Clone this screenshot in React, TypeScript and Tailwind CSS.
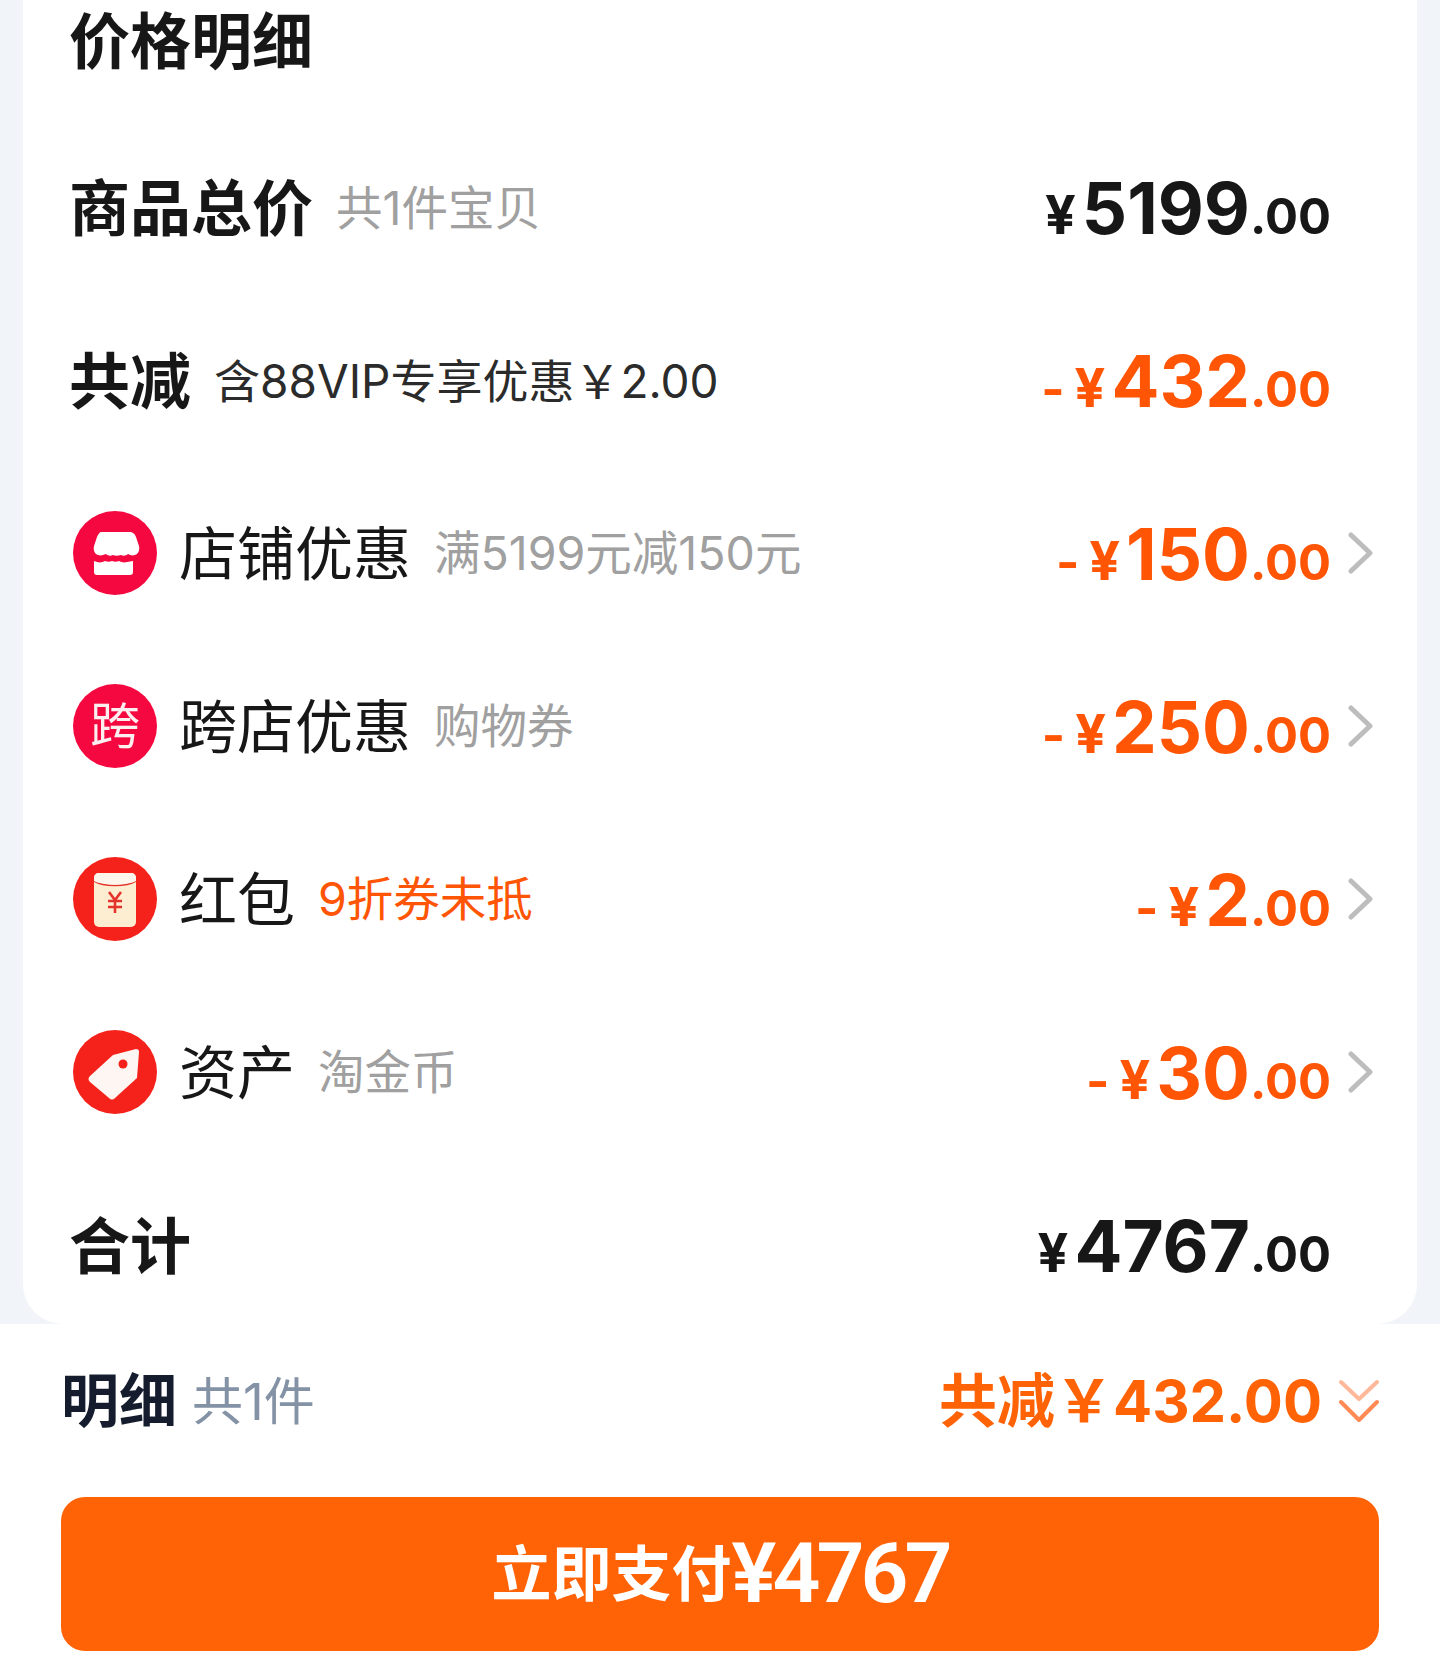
import type { ReactNode } from 'react';

const cjk = "font-['Inter','Noto_Sans_CJK_SC',sans-serif]";

function StoreIcon() {
  return (
    <svg viewBox="0 0 84 84" className="w-[84px] h-[84px] shrink-0">
      <circle cx="42" cy="42" r="42" fill="#f5073f" />
      <path d="M28 21h28c4 0 6 2 7 5l3 9c1 5-1 8-4 9-3 1-5 0-7-1-2 2-5 2-7 1-3 1-6 1-8 0-2 1-5 1-7-1-3 1-5 2-8 1-3-1-5-4-4-9l3-9c1-3 3-5 4-5z" fill="#fff" />
      <path d="M24 51c3 1 6 0 8-1 2 1 5 1 7 0 2 1 5 1 7 0 2 1 5 2 8 1l6-1v11c0 2-1 3-3 3H24c-2 0-3-1-3-3V50z" fill="#fff" />
    </svg>
  );
}

function KuaIcon() {
  return (
    <div className={`w-[84px] h-[84px] shrink-0 rounded-full bg-[#f5073f] flex items-center justify-center text-[50px] leading-none text-[#fdeef0] ${cjk}`}>跨</div>
  );
}

function EnvelopeIcon() {
  return (
    <svg viewBox="0 0 84 84" className="w-[84px] h-[84px] shrink-0">
      <circle cx="42" cy="42" r="42" fill="#f5221b" />
      <rect x="21" y="16" width="42" height="54" rx="5" fill="#fdeed2" />
      <path d="M21 24c10 6 32 6 42 0" fill="none" stroke="#e4332a" strokeWidth="1.6" />
      <path d="M21 21c0-3 2-5 5-5h32c3 0 5 2 5 5v3c-10 5-32 5-42 0z" fill="#fdf6ec" />
      <path d="M36 35l6 8 6-8M35 44h14M35 50h14M42 43v13" fill="none" stroke="#e4332a" strokeWidth="2.6" />
    </svg>
  );
}

function TagIcon() {
  return (
    <svg viewBox="0 0 84 84" className="w-[84px] h-[84px] shrink-0">
      <circle cx="42" cy="42" r="42" fill="#f5221b" />
      <path d="M40 25l23-6c2 0 3 1 3 3l-2 26-22 20c-2 2-4 2-6 0L17 52c-2-2-2-4 0-6z" fill="#fdf6f2" />
      <circle cx="50" cy="34" r="4.5" fill="#f5221b" />
    </svg>
  );
}

function Amount({ minus, value, color }: { minus?: boolean; value: string; color: string }) {
  return (
    <div className={`flex items-baseline font-['Inter',sans-serif] font-bold ${color}`}>
      {minus && <span className="text-[50px] leading-none mr-[10px]">-</span>}
      <span className="text-[54px] leading-none mr-[6px]">¥</span>
      <span className="text-[71px] leading-none">{value}</span>
      <span className="text-[49px] leading-none">.00</span>
    </div>
  );
}

function Row({ icon, label, note, noteColor, value }: { icon: ReactNode; label: string; note: string; noteColor?: string; value: string }) {
  return (
    <div className="h-[173px] flex items-center">
      <div className="ml-[4px] mr-[22px] mb-[2px]">{icon}</div>
      <span className={`text-[58px] text-[#171717] leading-none ${cjk}`}>{label}</span>
      <span className={`ml-[23px] text-[46.5px] leading-none ${noteColor ?? 'text-[#a0a0a0]'} ${cjk}`}>{note}</span>
      <div className="ml-auto flex items-center">
        <div className="pt-[2px]">
          <Amount minus value={value} color="text-[#ff5505]" />
        </div>
        <svg viewBox="0 0 25 42" className="w-[25px] h-[42px] ml-[17px] mb-[2px]" fill="none" stroke="#bdbdbd" strokeWidth="5" strokeLinecap="round" strokeLinejoin="round">
          <path d="M3 3l19 18L3 39" />
        </svg>
      </div>
    </div>
  );
}

export default function App() {
  return (
    <div className="w-[1440px] h-[1662px] overflow-hidden bg-white flex flex-col">
      <div className="bg-[#f1f5f9] h-[1324px] px-[23px]">
        <div className="bg-white h-full rounded-b-[40px] pl-[46px] pr-[44px]">
          <div className="h-[121px] pb-[37px] flex items-center">
            <h2 className={`text-[61px] font-bold leading-none text-[#171717] ${cjk}`}>价格明细</h2>
          </div>

          <div className="h-[173px] pt-[4px] flex items-center">
            <span className={`text-[61px] font-bold leading-none text-[#171717] ${cjk}`}>商品总价</span>
            <span className={`ml-[23px] mb-[2px] text-[46.5px] leading-none text-[#a0a0a0] ${cjk}`}>共1件宝贝</span>
            <div className="ml-auto pr-[42px] mb-[2px]">
              <Amount value="5199" color="text-[#171717]" />
            </div>
          </div>

          <div className="h-[173px] pt-[4px] flex items-center">
            <span className={`text-[61px] font-bold leading-none text-[#171717] ${cjk}`}>共减</span>
            <span className={`ml-[23px] mb-[4px] text-[46px] leading-none text-[#2b2b2b] ${cjk}`}>含88VIP专享优惠￥2.00</span>
            <div className="ml-auto pr-[42px] mb-[2px]">
              <Amount minus value="432" color="text-[#ff5505]" />
            </div>
          </div>

          <Row icon={<StoreIcon />} label="店铺优惠" note="满5199元减150元" value="150" />
          <Row icon={<KuaIcon />} label="跨店优惠" note="购物券" value="250" />
          <Row icon={<EnvelopeIcon />} label="红包" note="9折券未抵" noteColor="text-[#ff5505]" value="2" />
          <Row icon={<TagIcon />} label="资产" note="淘金币" value="30" />

          <div className="h-[173px] pt-[4px] flex items-center">
            <span className={`text-[61px] font-bold leading-none text-[#171717] ${cjk}`}>合计</span>
            <div className="ml-auto pr-[42px] mb-[2px]">
              <Amount value="4767" color="text-[#171717]" />
            </div>
          </div>
        </div>
      </div>

      <div className="px-[61px]">
        <div className="h-[173px] pb-[19px] flex items-center">
          <span className={`text-[58px] font-bold leading-none text-[#141c2e] ${cjk}`}>明细</span>
          <span className={`ml-[15px] text-[51px] leading-none text-[#8492a6] ${cjk}`}>共1件</span>
          <div className={`ml-auto flex items-center text-[#ff6305] font-bold text-[58px] leading-none ${cjk}`}>
            <span>共减￥432.00</span>
            <svg viewBox="0 0 40 44" className="w-[40px] h-[44px] ml-[17px]" fill="none" strokeWidth="4" strokeLinecap="round" strokeLinejoin="round">
              <path d="M2 3l18 17 18-17" stroke="#ffb899" />
              <path d="M2 23l18 18 18-18" stroke="#ff8a55" />
            </svg>
          </div>
        </div>
        <button className="w-full h-[154px] rounded-[24px] bg-[#ff6305] flex items-center justify-center text-white font-bold leading-none">
          <span className={`text-[60px] ${cjk}`}>立即支付</span>
          <span className="text-[84px] tracking-[-4px] font-semibold font-['Roboto',sans-serif]">¥4767</span>
        </button>
      </div>
    </div>
  );
}
